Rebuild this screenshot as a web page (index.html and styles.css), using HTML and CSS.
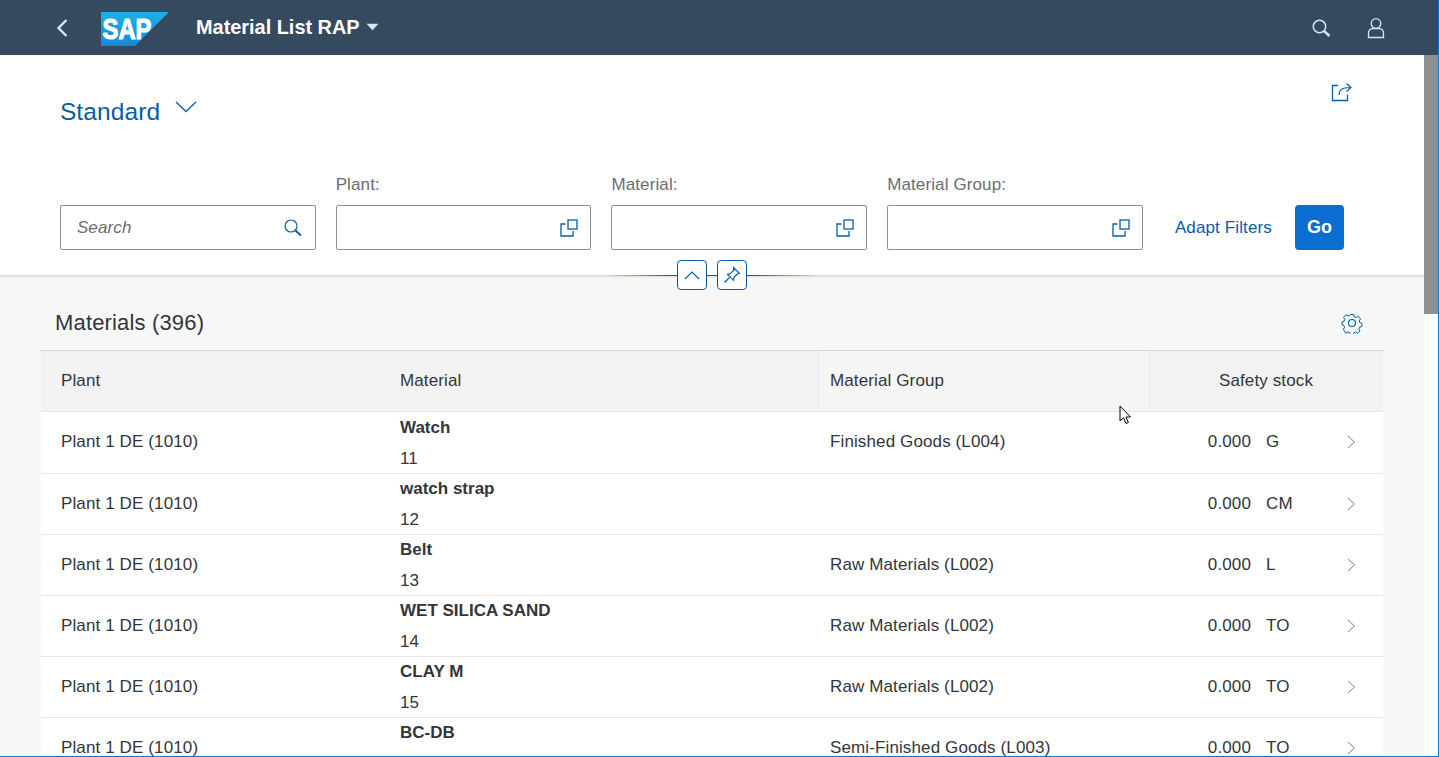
FILE: index.html
```html
<!DOCTYPE html>
<html lang="en">
<head>
<meta charset="utf-8">
<title>Material List RAP</title>
<link rel="stylesheet" href="styles.css">
</head>
<body>
<div class="app">
  <header class="shell">
    <svg class="back" width="14" height="22" viewBox="0 0 14 22"><path d="M11.5 3 3.5 11l8 8" fill="none" stroke="#d1e8ff" stroke-width="2.4"/></svg>
    <svg class="logo" width="68" height="34" viewBox="0 0 68 34"><defs><linearGradient id="sap" x1="0" y1="0" x2="0" y2="1"><stop offset="0" stop-color="#1eb0e8"/><stop offset="1" stop-color="#108cd0"/></linearGradient></defs><polygon points="0,0 68,0 34,34 0,34" fill="url(#sap)"/><text x="1.500" y="27" class="logo-text" textLength="49" lengthAdjust="spacingAndGlyphs">SAP</text></svg>
    <div class="app-title">Material List RAP</div>
    <svg class="title-caret" width="13" height="8" viewBox="0 0 14 8"><polygon points="0.5,0.5 13.5,0.5 7,7.5" fill="#d1e8ff"/></svg>
    <div class="shell-actions">
      <svg width="20" height="20" viewBox="0 0 20 20"><circle cx="8.5" cy="8.500" r="6.200" fill="none" stroke="#d1e8ff" stroke-width="1.500"/><path d="M13 13l5.500 5" fill="none" stroke="#d1e8ff" stroke-width="2.400"/></svg>
      <svg width="18" height="22" viewBox="0 0 18 22"><circle cx="9" cy="6.500" r="4.800" fill="none" stroke="#d1e8ff" stroke-width="1.300"/><path d="M1.500 20.500v-4.500c0-2.500 2-4.500 4.500-4.500h6c2.500 0 4.500 2 4.500 4.500v4.500z" fill="none" stroke="#d1e8ff" stroke-width="1.300"/></svg>
    </div>
  </header>
  <div class="viewport">
    <main class="page">
      <section class="filterbar">
        <div class="variant-row">
          <div class="variant"><span class="variant-name">Standard</span>
            <svg class="variant-caret" width="22" height="12" viewBox="0 0 22 12"><path d="M1 1l10 9.500L21 1" fill="none" stroke="#0a5ca6" stroke-width="1.300"/></svg>
          </div>
          <svg class="share" width="22" height="20" viewBox="0 0 22 20"><path d="M7 3.500H1.500v15h15v-6" fill="none" stroke="#0a5ca6" stroke-width="1.300"/><path d="M8 13c0-5 3-7.500 11-7.500M15.500 1.500l4.500 4-4.500 4" fill="none" stroke="#0a5ca6" stroke-width="1.200"/></svg>
        </div>
        <div class="filters">
          <div class="filter">
            <div class="input"><span class="placeholder">Search</span>
              <svg width="20" height="20" viewBox="0 0 20 20"><circle cx="8" cy="8" r="6" fill="none" stroke="#0a5ca6" stroke-width="1.200"/><path d="M12.500 12.500l5.500 5" fill="none" stroke="#0a5ca6" stroke-width="2"/></svg>
            </div>
          </div>
          <div class="filter"><label class="filter-label">Plant:</label>
            <div class="input"><svg width="18" height="18" viewBox="0 0 18 18"><use href="#vh"/></svg></div>
          </div>
          <div class="filter"><label class="filter-label">Material:</label>
            <div class="input"><svg width="18" height="18" viewBox="0 0 18 18"><use href="#vh"/></svg></div>
          </div>
          <div class="filter"><label class="filter-label">Material Group:</label>
            <div class="input"><svg width="18" height="18" viewBox="0 0 18 18"><use href="#vh"/></svg></div>
          </div>
          <a class="adapt">Adapt Filters</a>
          <button class="go">Go</button>
        </div>
        <div class="expander">
          <span class="exp-btn"><svg width="16" height="10" viewBox="0 0 16 10"><path d="M1 9l7-7 7 7" fill="none" stroke="#0a5ca6" stroke-width="1.200"/></svg></span>
          <span class="exp-btn"><svg width="18" height="18" viewBox="0 0 18 18"><path d="M10.500 1.500l6 6-2.500.8-3 3-.5 3-6-6 3-.8 3-3zM6.500 11.500l-5 5" fill="none" stroke="#0a5ca6" stroke-width="1.200"/></svg></span>
        </div>
      </section>
      <section class="content">
        <div class="toolbar">
          <h2 class="table-title">Materials (396)</h2>
          <svg width="22" height="22" viewBox="0 0 22 22"><circle cx="11" cy="11" r="3.500" fill="none" stroke="#0a5ca6" stroke-width="1.200"/><path d="M9 1.500h4l.6 2.700 1.900.8 2.400-1.400 2.600 2.900-1.500 2.200.7 1.900 2.300.6v0l0 .3v3.500l-2.600.6-.8 1.900 1.400 2.300-2.800 2.700-2.300-1.500-1.900.8-.6 2.400H9l-.6-2.500-1.900-.8-2.300 1.500L1.400 18l1.400-2.300-.8-1.900-2-.6V9.500l2.300-.6.7-1.900L1.600 4.700 4.300 1.900l2.300 1.400L8.500 2.500z" fill="none" stroke="#0a5ca6" stroke-width="1.100" transform="translate(1.100 1.100) scale(.9)"/></svg>
        </div>
        <div class="table">
          <div class="row head">
            <div class="c c-plant">Plant</div>
            <div class="c c-mat">Material</div>
            <div class="c c-group head-light">Material Group</div>
            <div class="c c-stock">Safety stock</div>
          </div>
          <div class="row first">
            <div class="c c-plant">Plant 1 DE (1010)</div>
            <div class="c c-mat"><b>Watch</b><span>11</span></div>
            <div class="c c-group">Finished Goods (L004)</div>
            <div class="c c-stock body"><span class="qty">0.000</span><span class="unit">G</span><svg class="nav" width="9" height="14" viewBox="0 0 9 14"><path d="M1 1l6.500 6L1 13" fill="none" stroke="#737d85" stroke-width="1"/></svg></div>
          </div>
          <div class="row">
            <div class="c c-plant">Plant 1 DE (1010)</div>
            <div class="c c-mat"><b>watch strap</b><span>12</span></div>
            <div class="c c-group"></div>
            <div class="c c-stock body"><span class="qty">0.000</span><span class="unit">CM</span><svg class="nav" width="9" height="14" viewBox="0 0 9 14"><path d="M1 1l6.500 6L1 13" fill="none" stroke="#737d85" stroke-width="1"/></svg></div>
          </div>
          <div class="row">
            <div class="c c-plant">Plant 1 DE (1010)</div>
            <div class="c c-mat"><b>Belt</b><span>13</span></div>
            <div class="c c-group">Raw Materials (L002)</div>
            <div class="c c-stock body"><span class="qty">0.000</span><span class="unit">L</span><svg class="nav" width="9" height="14" viewBox="0 0 9 14"><path d="M1 1l6.500 6L1 13" fill="none" stroke="#737d85" stroke-width="1"/></svg></div>
          </div>
          <div class="row">
            <div class="c c-plant">Plant 1 DE (1010)</div>
            <div class="c c-mat"><b>WET SILICA SAND</b><span>14</span></div>
            <div class="c c-group">Raw Materials (L002)</div>
            <div class="c c-stock body"><span class="qty">0.000</span><span class="unit">TO</span><svg class="nav" width="9" height="14" viewBox="0 0 9 14"><path d="M1 1l6.500 6L1 13" fill="none" stroke="#737d85" stroke-width="1"/></svg></div>
          </div>
          <div class="row">
            <div class="c c-plant">Plant 1 DE (1010)</div>
            <div class="c c-mat"><b>CLAY M</b><span>15</span></div>
            <div class="c c-group">Raw Materials (L002)</div>
            <div class="c c-stock body"><span class="qty">0.000</span><span class="unit">TO</span><svg class="nav" width="9" height="14" viewBox="0 0 9 14"><path d="M1 1l6.500 6L1 13" fill="none" stroke="#737d85" stroke-width="1"/></svg></div>
          </div>
          <div class="row">
            <div class="c c-plant">Plant 1 DE (1010)</div>
            <div class="c c-mat"><b>BC-DB</b><span>16</span></div>
            <div class="c c-group">Semi-Finished Goods (L003)</div>
            <div class="c c-stock body"><span class="qty">0.000</span><span class="unit">TO</span><svg class="nav" width="9" height="14" viewBox="0 0 9 14"><path d="M1 1l6.500 6L1 13" fill="none" stroke="#737d85" stroke-width="1"/></svg></div>
          </div>
        </div>
      </section>
    </main>
    <div class="scrollbar"><div class="thumb"></div></div>
  </div>
  <svg class="cursor" width="14" height="20" viewBox="0 0 14 20"><path d="M1 1v15l3.500-3.200 2.500 5.700 2.400-1-2.500-5.500h4.600z" fill="#fff" stroke="#000" stroke-width="1"/></svg>
</div>
<svg class="defs" width="0" height="0"><defs><g id="vh"><path d="M5.500 5H1v12h12v-5" fill="none" stroke="#0a5ca6" stroke-width="1.300"/><rect x="8" y="1" width="9" height="9" fill="none" stroke="#0a5ca6" stroke-width="1.300"/></g></defs></svg>
</body>
</html>
```
FILE: styles.css
```css
* { box-sizing: border-box; }
html, body { margin: 0; height: 100%; overflow: hidden; }
body { font-family: "Liberation Sans", Arial, sans-serif; color: #32363a; background: #fff; letter-spacing: .12px; }
.defs { position: absolute; }
.app { position: relative; width: 1439px; height: 757px; display: flex; flex-direction: column; overflow: hidden; border-right: 1px solid #0a7cd6; border-bottom: 1px solid #0a7cd6; }

.shell { flex: none; height: 55px; background: #354a5f; display: flex; align-items: center; padding: 0 53px 0 55px; }
.back { margin-right: 32px; }
.logo { display: block; margin-right: 27px; margin-top: 3px; }
.logo-text { font-family: "Liberation Sans", sans-serif; font-weight: 700; font-size: 29px; fill: #fff; stroke: #fff; stroke-width: 1.1px; letter-spacing: 0; }
.app-title { color: #fff; font-size: 19.9px; font-weight: 700; line-height: 24px; margin-top: -2px; letter-spacing: 0; }
.title-caret { margin-left: 6px; margin-top: -1px; }
.shell-actions { margin-left: auto; display: flex; align-items: center; gap: 36px; }

.viewport { flex: 1; display: flex; min-height: 0; }
.page { flex: 1; min-width: 0; background: #f7f7f7; overflow: hidden; }
.scrollbar { flex: none; width: 14px; background: #fff; }
.thumb { height: 259px; background: #8f8f8f; }

.filterbar { position: relative; height: 220px; background: #fff; box-shadow: 0 1px 3px rgba(0,0,0,.2); padding: 0 80px 0 59.9px; display: flex; flex-direction: column; }
.variant-row { display: flex; justify-content: space-between; height: 119px; }
.variant { display: flex; align-items: flex-start; padding-top: 40px; }
.variant-name { font-size: 24.5px; line-height: 34px; color: #0a5ca6; }
.variant-caret { margin: 6px 0 0 15px; }
.share { margin-top: 27px; margin-right: -9px; }

.filters { display: flex; align-items: flex-end; gap: 20px; }
.filter { width: 255.75px; flex: none; }
.filter-label { display: block; font-size: 17px; line-height: 22px; color: #6a6d70; margin-bottom: 9px; }
.input { height: 45px; border: 1px solid #89919a; border-radius: 2px; background: #fff; display: flex; align-items: center; justify-content: flex-end; padding: 0 12px 0 16px; }
.placeholder { margin-right: auto; font-size: 17px; font-style: italic; color: #6a6d70; }
.adapt { font-size: 17px; line-height: 45px; color: #0a5ca6; margin-left: 12px; white-space: nowrap; }
.go { width: 49px; height: 45px; margin-left: 3px; border: 0; border-radius: 4px; background: #0a6ed1; color: #fff; font: 700 18px "Liberation Sans", sans-serif; padding: 0; }

.expander { position: absolute; left: 607px; top: 205px; width: 210px; height: 30px; display: flex; justify-content: center; gap: 10px; background: linear-gradient(to right, transparent, #0a5ca6 30%, #0a5ca6 70%, transparent) center / 100% 1px no-repeat; }
.exp-btn { width: 30px; height: 30px; background: #fff; border: 1px solid #0a5ca6; border-radius: 4px; display: flex; align-items: center; justify-content: center; }

.content { padding: 0 41px; }
.toolbar { height: 76px; margin: 0 -1px; padding: 20px 21px 0 15px; display: flex; align-items: center; justify-content: space-between; border-bottom: 1px solid #d9d9d9; }
.table-title { margin: 0; font-size: 22px; font-weight: 400; line-height: 28px; letter-spacing: .16px; }
.table { background: #fff; }
.row { display: flex; height: 61px; border-bottom: 1px solid #e5e5e5; font-size: 17px; }
.row.first { height: 62px; }
.row.first .c-plant, .row.first .c-group, .row.first .c-stock { padding-bottom: 1px; }
.row.head { height: 61px; background: #f2f2f2; }
.c { display: flex; align-items: center; padding-left: 10px; white-space: nowrap; }
.c-plant { width: 349px; padding-left: 20px; }
.c-mat { width: 430px; flex-direction: column; align-items: flex-start; justify-content: center; }
.c-mat b { font-weight: 700; line-height: 31px; letter-spacing: 0; }
.c-mat span { line-height: 31px; }
.c-group { width: 328px; }
.head-light { background: #f5f5f5; }
.c-stock { flex: 1; justify-content: center; padding: 0 0 0 1px; }
.c-stock.body { justify-content: flex-start; padding: 0; }
.qty { width: 103px; text-align: right; }
.unit { margin-left: 15px; width: 70px; }
.nav { margin-left: 11px; }
.cursor { position: absolute; left: 1119px; top: 405px; }
```
